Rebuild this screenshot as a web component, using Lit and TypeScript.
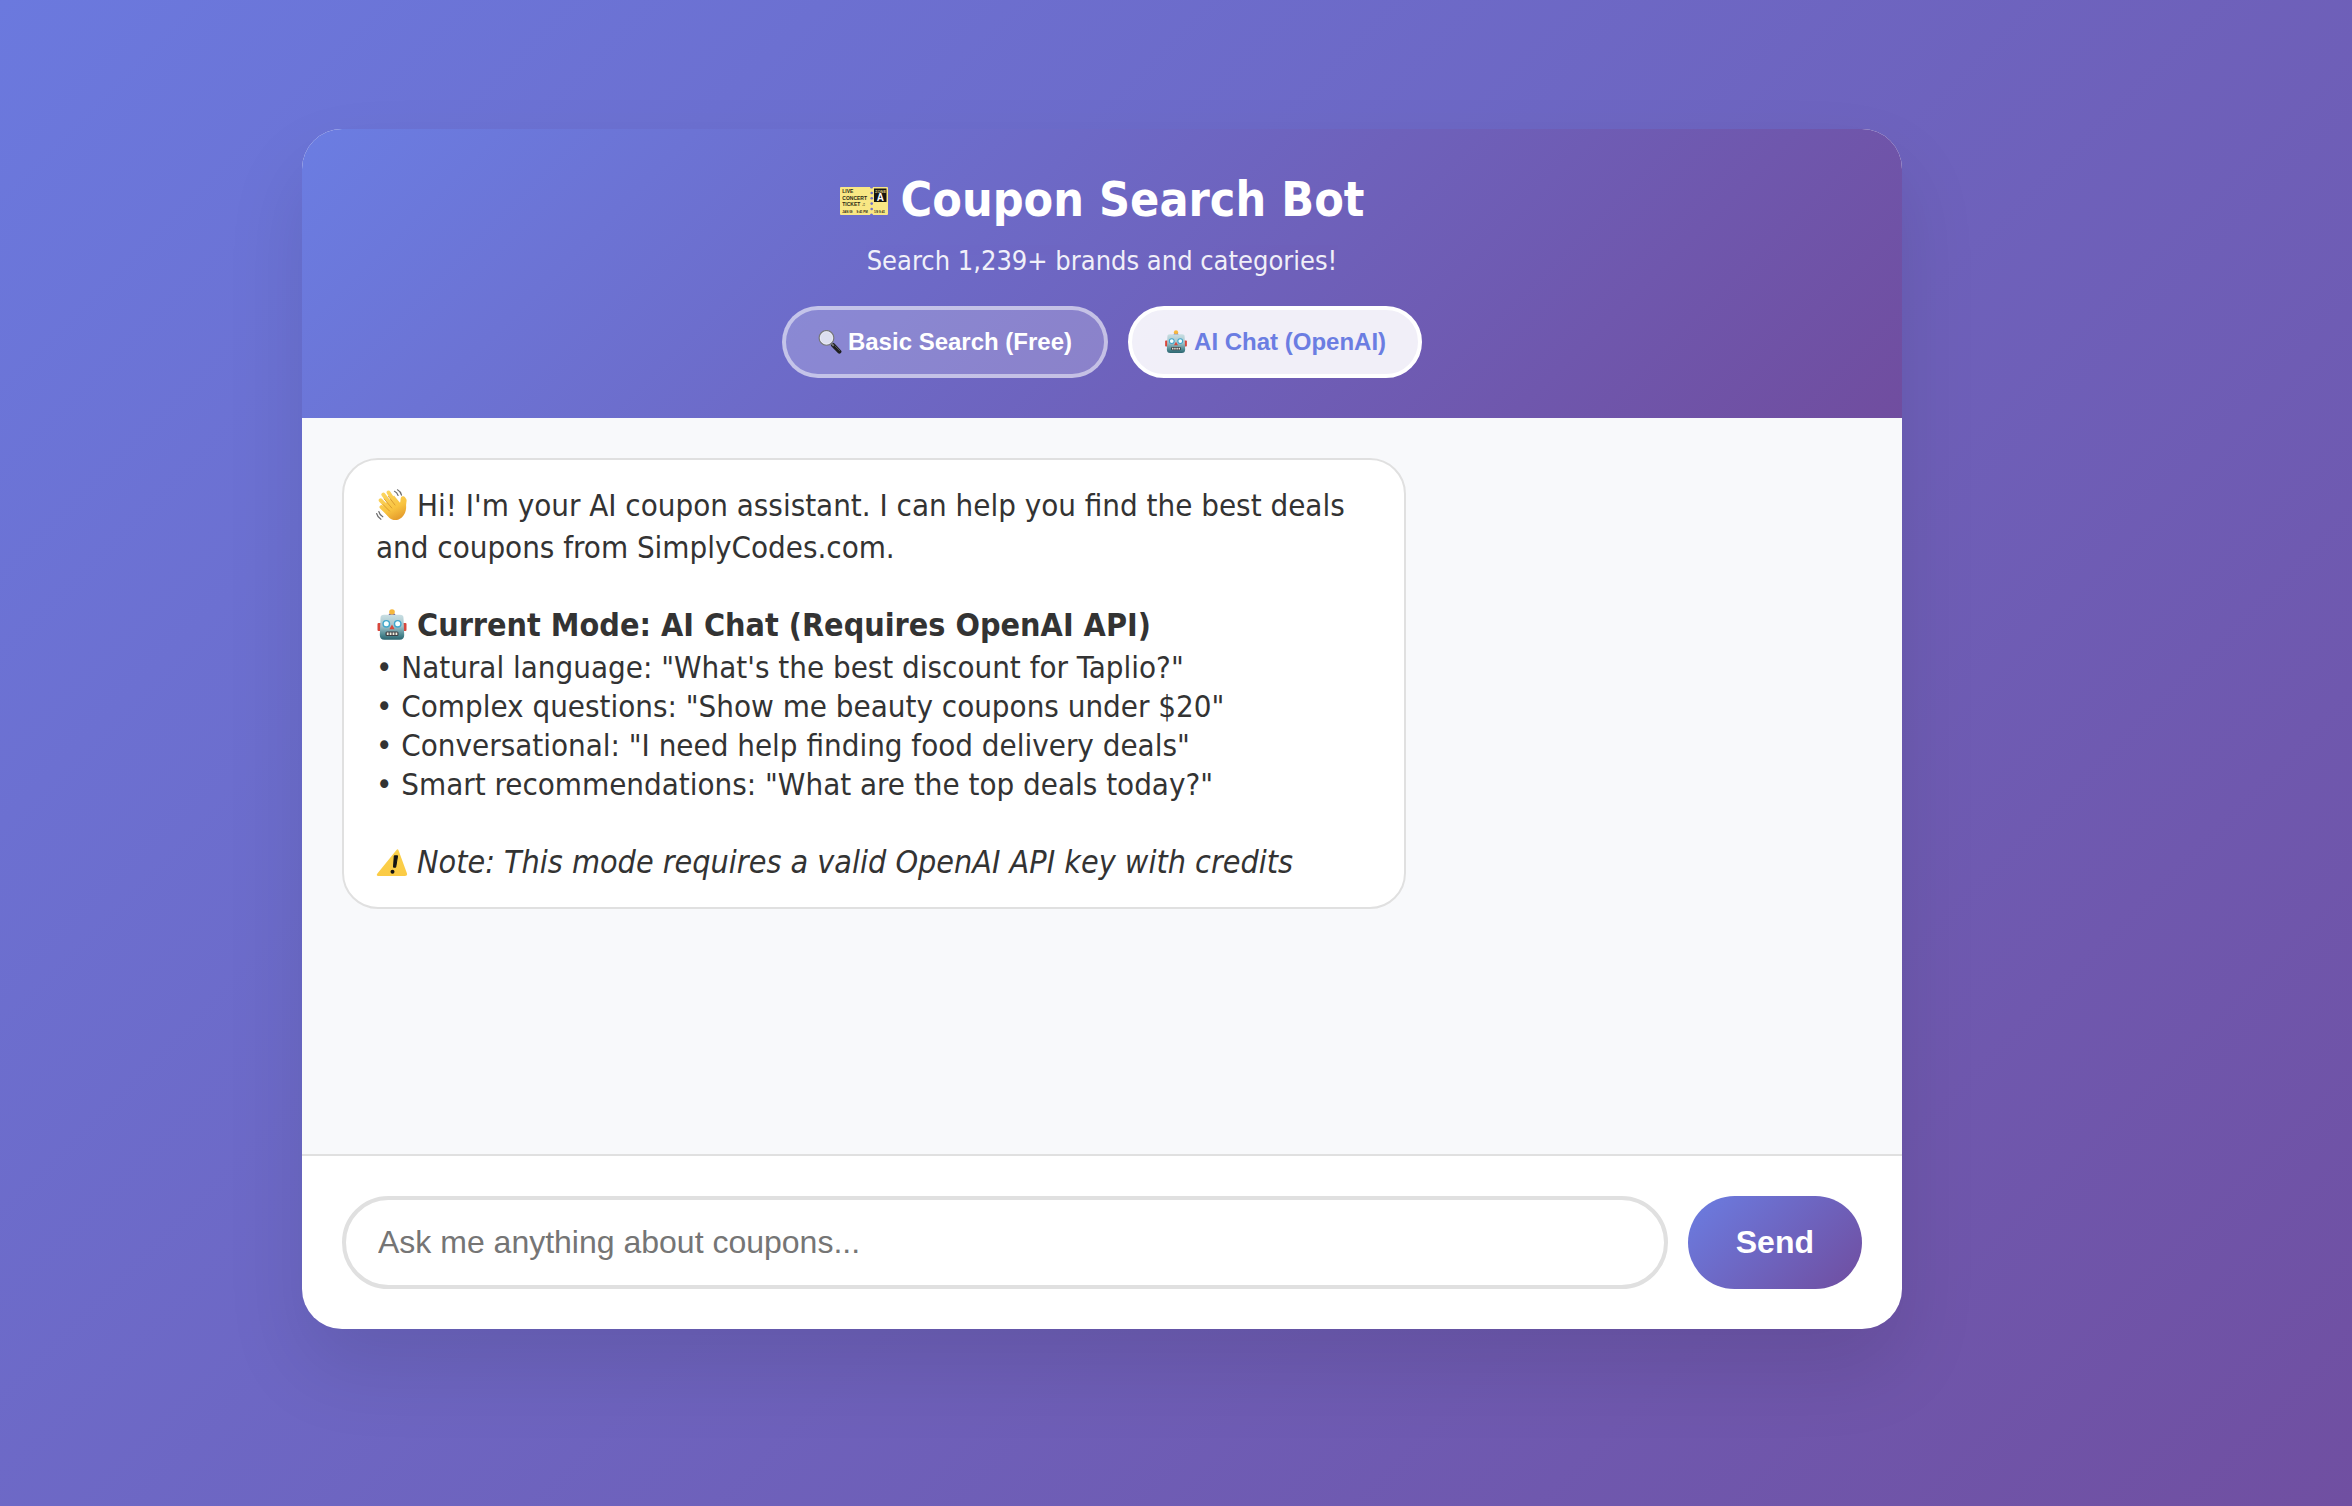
import { LitElement, html, css, svg } from "lit";
import { customElement, state } from "lit/decorators.js";

type Mode = "basic" | "ai";

const robot = svg`
  <defs>
    <linearGradient id="robotFace" x1="0" y1="0" x2="0" y2="1">
      <stop offset="0" stop-color="#c9dfe3" />
      <stop offset="0.45" stop-color="#a3c3ca" />
      <stop offset="0.8" stop-color="#4d8891" />
      <stop offset="1" stop-color="#2c646f" />
    </linearGradient>
  </defs>
  <rect x="1.500" y="14" width="4" height="8" rx="1" fill="#d8473c" />
  <rect x="26.500" y="14" width="4" height="8" rx="1" fill="#d8473c" />
  <path d="M12.500 6.500q0-2.500 3.500-2.500t3.500 2.500z" fill="#5c4a8c" />
  <circle cx="16" cy="3" r="2.800" fill="#f6b73c" />
  <path d="M4.500 9q0-3.200 3.500-3.200h16q3.500 0 3.500 3.200l.7 17q0 4.800-4.500 4.800H8.300q-4.500 0-4.500-4.800z" fill="url(#robotFace)" />
  <circle cx="10.300" cy="14.800" r="3.900" fill="#3fa6cc" />
  <circle cx="21.700" cy="14.800" r="3.900" fill="#3fa6cc" />
  <circle cx="10.300" cy="14.800" r="2.500" fill="#f6ffff" />
  <circle cx="21.700" cy="14.800" r="2.500" fill="#f6ffff" />
  <path d="M16 15.500l2.600 4.700h-5.200z" fill="#dc4638" />
  <rect x="9.500" y="22.500" width="13" height="4.500" rx="1.500" fill="#3d3f45" />
  <path d="M10.800 23.500h1.800v2.500h-1.800zM13.700 23.500h1.800v2.500h-1.800zM16.600 23.500h1.800v2.500h-1.800zM19.500 23.500h1.800v2.500h-1.800z" fill="#f3efe0" />`;

const wave = svg`
  <defs>
    <linearGradient id="waveSkin" gradientUnits="userSpaceOnUse" x1="8" y1="3" x2="22" y2="31">
      <stop offset="0" stop-color="#fbd560" />
      <stop offset="0.6" stop-color="#f9c440" />
      <stop offset="1" stop-color="#e39a2b" />
    </linearGradient>
  </defs>
  <g fill="none" stroke="url(#waveSkin)" stroke-linecap="round" stroke-width="4">
    <path d="M7.300 5.500L16 17" /><path d="M12.500 3.500L20 15" /><path d="M4.700 11.300L14 21" /><path d="M5.500 18L13 25" />
  </g>
  <path d="M10 14l8-7.500 6 7.300c.8-1.500.2-3.500.9-5 .8-2.200 3.900-1.800 4.600.2 2.200 2.200.4 4.500.6 7.500.3 4.500-.7 8.500-4.300 12-3.800 3.400-9.300 3.300-12.600.2L5.500 20z" fill="url(#waveSkin)" />
  <path d="M8.200 10l7.600 9M12.300 7.300l6.700 8.700M7 15.500l6.500 6.500" fill="none" stroke="#cf8a27" stroke-width="0.700" stroke-linecap="round" />
  <path d="M18.500 2.300q2.600 1.200 3.600 4.200M21.500.8q3.300 1.800 4 5.300M2.800 22.500q.8 3.500 4 5.300M.6 24.500q1 3.800 4.300 5.800" fill="none" stroke="#6d6d6d" stroke-width="1.200" stroke-linecap="round" />`;

const warning = svg`
  <defs>
    <linearGradient id="warnFill" x1="0" y1="0" x2="0" y2="1">
      <stop offset="0" stop-color="#fbd14b" /><stop offset="1" stop-color="#fbcb45" />
    </linearGradient>
  </defs>
  <path d="M20.300 4.200q1.500-2 2.300.4l8.400 22.800q.7 2.600-2 2.600H2.600q-3 0-1.200-2.600z" fill="url(#warnFill)" />
  <path d="M18.300 9.800h3.300l-1.900 11.400h-2.200z" fill="#141414" stroke="#141414" stroke-linejoin="round" />
  <circle cx="16.500" cy="25.700" r="2" fill="#141414" />`;

const magnifier = svg`
  <path d="M20 20l8.500 8.800" stroke="#1e1e20" stroke-width="5.500" stroke-linecap="round" />
  <path d="M17.500 17.500l3.500 3.700" stroke="#77777a" stroke-width="2.500" />
  <circle cx="11.300" cy="10.500" r="9.700" fill="#dddff0" stroke="#77787c" stroke-width="1.800" />
  <circle cx="11.300" cy="10.500" r="8.400" fill="none" stroke="#f4f5fa" stroke-width="0.800" />
  <path d="M23 21.500l6 6" stroke="#6a6a6e" stroke-width="1" stroke-linecap="round" />`;

const ticket = svg`
  <path d="M1 0h29a1.500 1.500 0 0 0 3 0h14q1 0 1 1v26q0 1-1 1H33a1.500 1.500 0 0 0-3 0H1q-1 0-1-1V1q0-1 1-1z" fill="#f9e784" />
  <g fill="#7072c8"><circle cx="31.700" cy="6" r="1.300" /><circle cx="31.700" cy="11.300" r="1.300" /><circle cx="31.700" cy="16.600" r="1.300" /><circle cx="31.700" cy="22" r="1.300" /></g>
  <rect x="34" y="1.500" width="12.500" height="13.500" fill="#16150f" />
  <g font-family="Liberation Sans, Arial, sans-serif" font-weight="700" fill="#2a2715">
    <text x="2.300" y="6.300" font-size="5">LIVE</text>
    <text x="2.300" y="12.500" font-size="5">CONCERT</text>
    <text x="2.300" y="18.700" font-size="5">TICKET ♫</text>
    <text x="2.300" y="25.800" font-size="3">JAN 09</text>
    <text x="16.500" y="25.800" font-size="3">9:41 PM</text>
    <text x="34" y="25.800" font-size="3">1/9 9:41</text>
    <text x="35" y="5.500" font-size="4" fill="#d8cb80">ZONE</text>
    <text x="36.700" y="14" font-size="10" fill="#fff">A</text>
  </g>`;

const icon = (art: unknown, label: string) => html`<svg class="emoji" viewBox="0 0 32 32" role="img" aria-label=${label}>${art}</svg>`;

@customElement("app-root")
export class AppRoot extends LitElement {
  @state() private mode: Mode = "ai";
  @state() private draft = "";

  static styles = css`
    :host {
      display: flex;
      align-items: center;
      justify-content: center;
      box-sizing: border-box;
      min-height: 100vh;
      padding: 0 148px 48px 0;
      background: linear-gradient(135deg, #6b79de 0%, #704fa1 100%);
      font-family: "DejaVu Sans Condensed", Tahoma, "DejaVu Sans", sans-serif;
      color: #333;
    }
    .card {
      display: flex;
      flex-direction: column;
      width: 100%;
      max-width: 1600px;
      min-height: 1200px;
      border-radius: 40px;
      background: #fff;
      box-shadow: 0 40px 80px rgba(0, 0, 0, 0.1);
      overflow: hidden;
    }
    .header {
      display: flex;
      flex-direction: column;
      align-items: center;
      padding: 40px;
      background: linear-gradient(135deg, #6b7de2 0%, #704d9f 100%);
      color: #fff;
      text-align: center;
    }
    h1 {
      display: flex;
      align-items: center;
      gap: 13px;
      margin: 0 0 14px;
      font-size: 48px;
      line-height: 60px;
    }
    .ticket { width: 48px; height: 28px; margin-top: 4px; }
    .tagline { margin: 0; font-size: 27px; line-height: 36px; opacity: 0.9; }
    .modes { display: flex; gap: 20px; margin-top: 27px; }
    button { font-family: "Liberation Sans", Arial, sans-serif; font-weight: 700; cursor: pointer; }
    .mode {
      display: flex;
      align-items: center;
      gap: 6px;
      height: 72px;
      padding: 0 32px;
      border: 4px solid rgba(255, 255, 255, 0.5);
      border-radius: 40px;
      background: rgba(255, 255, 255, 0.2);
      color: #fff;
      font-size: 24px;
    }
    .mode.active { border-color: #fff; background: rgba(255, 255, 255, 0.9); color: #6b7de2; }
    .mode .emoji { width: 24px; height: 24px; }
    .log { flex: 1; padding: 40px; background: #f8f9fb; }
    .message {
      box-sizing: border-box;
      max-width: 70%;
      padding: 26px 32px 22px;
      border: 2px solid #e0e0e0;
      border-radius: 36px;
      background: #fff;
      font-size: 31px;
      line-height: 39px;
    }
    p, ul { margin: 0; padding: 0; }
    .gap { margin-bottom: 39px; }
    strong, em { font-size: 32px; }
    .message .emoji {
      width: 32px;
      height: 32px;
      margin: 0 9px 7px 0;
      vertical-align: -12px;
    }
    ul { list-style: none; }
    li::before { content: "• "; }
    .composer {
      display: flex;
      gap: 20px;
      padding: 40px;
      border-top: 2px solid #e0e0e0;
    }
    input {
      flex: 1;
      min-width: 0;
      box-sizing: border-box;
      height: 93px;
      padding: 0 32px;
      border: 4px solid #e0e0e0;
      border-radius: 50px;
      background: #fff;
      color: #333;
      font-family: "Liberation Sans", Arial, sans-serif;
      font-size: 32px;
      outline: none;
    }
    input::placeholder { color: #757575; }
    .send {
      padding: 0 48px;
      border: 0;
      border-radius: 50px;
      background: linear-gradient(135deg, #6b7de2 0%, #704d9f 100%);
      color: #fff;
      font-size: 32px;
    }
  `;

  private modeButton(mode: Mode, art: unknown, glyph: string, label: string) {
    const active = this.mode === mode;
    return html`<button
      type="button"
      class="mode ${active ? "active" : ""}"
      aria-pressed=${active}
      @click=${() => (this.mode = mode)}
    >${icon(art, glyph)}<span>${label}</span></button>`;
  }

  private submit(event: Event) {
    event.preventDefault();
    this.draft = "";
  }

  render() {
    return html`
      <main class="card">
        <header class="header">
          <h1><svg class="ticket" viewBox="0 0 48 28" aria-hidden="true">${ticket}</svg><span>Coupon Search Bot</span></h1>
          <p class="tagline">Search 1,239+ brands and categories!</p>
          <div class="modes">
            ${this.modeButton("basic", magnifier, "Magnifying glass", "Basic Search (Free)")}
            ${this.modeButton("ai", robot, "Robot", "AI Chat (OpenAI)")}
          </div>
        </header>
        <section class="log" aria-label="Conversation">
          <article class="message">
            <p class="gap">${icon(wave, "Waving hand")}Hi! I'm your AI coupon assistant. I can help you find the best deals and coupons from SimplyCodes.com.</p>
            <p>${icon(robot, "Robot")}<strong>Current Mode: AI Chat (Requires OpenAI API)</strong></p>
            <ul class="gap">
              <li>Natural language: "What's the best discount for Taplio?"</li>
              <li>Complex questions: "Show me beauty coupons under $20"</li>
              <li>Conversational: "I need help finding food delivery deals"</li>
              <li>Smart recommendations: "What are the top deals today?"</li>
            </ul>
            <p>${icon(warning, "Warning")}<em>Note: This mode requires a valid OpenAI API key with credits</em></p>
          </article>
        </section>
        <form class="composer" @submit=${this.submit}>
          <input
            type="text"
            aria-label="Message"
            placeholder="Ask me anything about coupons..."
            .value=${this.draft}
            @input=${(e: Event) => (this.draft = (e.target as HTMLInputElement).value)}
          />
          <button class="send" type="submit">Send</button>
        </form>
      </main>
    `;
  }
}
